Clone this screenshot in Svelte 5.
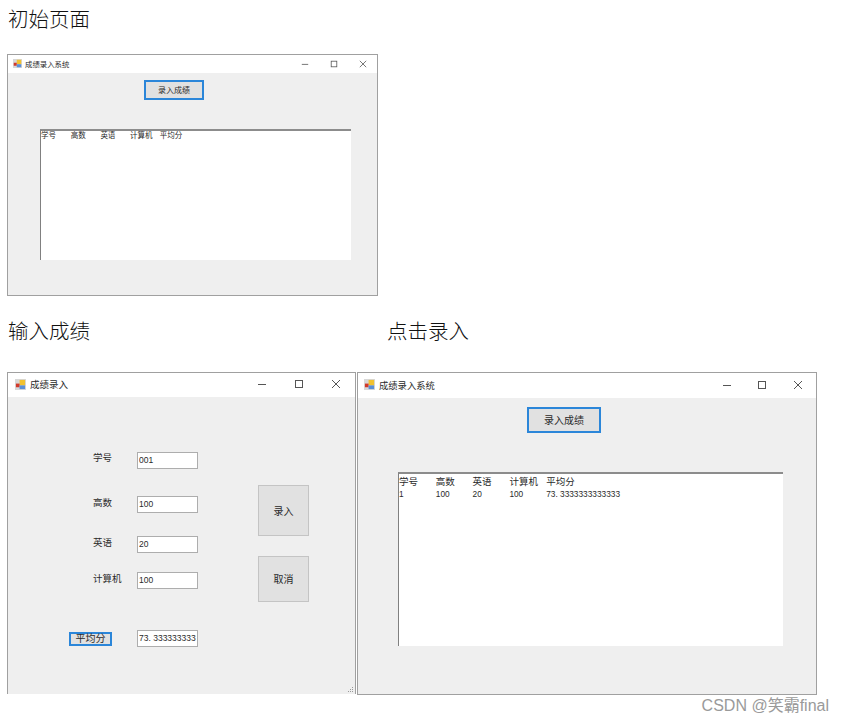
<script lang="ts">
  const columns = ['学号', '高数', '英语', '计算机', '平均分'];
  const result = ['1', '100', '20', '100', '73. 3333333333333'];
  const fields = [
    { label: '学号', value: '001' },
    { label: '高数', value: '100' },
    { label: '英语', value: '20' },
    { label: '计算机', value: '100' }
  ];
</script>

{#snippet titlebar(title: string)}
  <div class="titlebar">
    <svg class="app-icon" viewBox="0 0 12 12">
      <rect width="12" height="12" fill="#d8d8d8" />
      <rect x="5" y="1" width="6" height="6" fill="#f2c230" />
      <rect x="1" y="5" width="4" height="4" fill="#d23a2a" />
      <rect x="5" y="7" width="6" height="4" fill="#5a8fd8" />
    </svg>
    <span class="title">{title}</span>
    <div class="controls">
      <svg viewBox="0 0 10 10"><path d="M1 5.5h8" /></svg>
      <svg viewBox="0 0 10 10"><rect x="1.5" y="1.5" width="7" height="7" /></svg>
      <svg viewBox="0 0 10 10"><path d="M1 1l8 8M9 1l-8 8" /></svg>
    </div>
  </div>
{/snippet}

{#snippet listview(rows: string[][])}
  <div class="listview">
    <div class="list-row head">
      {#each columns as col}<span>{col}</span>{/each}
    </div>
    {#each rows as row}
      <div class="list-row">
        {#each row as cell}<span>{cell}</span>{/each}
      </div>
    {/each}
  </div>
{/snippet}

<main class="page">
  <h2 class="caption">初始页面</h2>
  <section class="window win-initial">
    {@render titlebar('成绩录入系统')}
    <div class="body">
      <button class="btn focused open-btn">录入成绩</button>
      {@render listview([])}
    </div>
  </section>

  <div class="captions">
    <h2 class="caption">输入成绩</h2>
    <h2 class="caption">点击录入</h2>
  </div>

  <div class="windows">
    <section class="window win-entry">
      {@render titlebar('成绩录入')}
      <div class="body">
        <div class="form">
          {#each fields as field}
            <div class="field">
              <span class="field-label">{field.label}</span>
              <input class="input" value={field.value} readonly />
            </div>
          {/each}
          <div class="field average">
            <button class="btn focused avg-btn">平均分</button>
            <input class="input" value="73. 3333333333333" readonly />
          </div>
        </div>
        <div class="actions">
          <button class="btn big submit">录入</button>
          <button class="btn big cancel">取消</button>
        </div>
        <svg class="grip" viewBox="0 0 8 8">
          <path d="M6 1h1v1H6zM4 3h1v1H4zM6 3h1v1H6zM2 5h1v1H2zM4 5h1v1H4zM6 5h1v1H6z" />
        </svg>
      </div>
    </section>

    <section class="window win-result">
      {@render titlebar('成绩录入系统')}
      <div class="body">
        <button class="btn focused open-btn">录入成绩</button>
        {@render listview([result])}
      </div>
    </section>
  </div>

  <div class="watermark">CSDN @笑霸final</div>
</main>

<style>
  :global(body) {
    background: #fff;
  }

  .page {
    position: relative;
    box-sizing: border-box;
    width: 843px;
    height: 724px;
    padding-left: 7px;
    overflow: hidden;
    font-family: "Liberation Sans", "Noto Sans CJK SC", sans-serif;
    color: #2a2a2a;
  }

  .caption {
    margin: 0;
    padding-left: 1px;
    height: 40px;
    line-height: 40px;
    font-family: "Liberation Serif", "Noto Sans CJK SC", serif;
    font-size: 20.5px;
    font-weight: 300;
    color: #111;
  }

  .captions {
    display: flex;
    gap: 296px;
    margin-top: 16px;
  }

  .window {
    box-sizing: border-box;
    display: flex;
    flex-direction: column;
    border: 1px solid #a0a0a0;
    background: #efefef;
  }

  .titlebar {
    box-sizing: border-box;
    display: flex;
    align-items: center;
    flex: none;
    background: #fff;
  }

  .app-icon {
    flex: none;
  }

  .controls {
    display: flex;
    margin-left: auto;
  }

  .controls svg {
    fill: none;
    stroke: #555;
    stroke-width: 1;
  }

  .body {
    position: relative;
    flex: 1;
    min-height: 0;
  }

  .btn {
    display: block;
    box-sizing: border-box;
    padding: 0 0 1px;
    border: 1px solid #c4c4c4;
    background: #e1e1e1;
    font-family: inherit;
    color: #2a2a2a;
  }

  .btn.focused {
    border: 2px solid #2b86d9;
  }

  .listview {
    box-sizing: border-box;
    background: #fff;
    border-top: 2px solid #8c8c8c;
    border-left: 1px solid #808080;
  }

  .list-row {
    display: flex;
  }

  /* first window: everything is drawn about 0.8x */
  .win-initial {
    width: 371px;
    height: 242px;
    margin-top: 14px;
  }

  .win-initial .titlebar {
    height: 18px;
    padding: 0 0 1px 5px;
    font-size: 7.4px;
  }

  .win-initial .app-icon {
    width: 9px;
    height: 9px;
    margin-right: 3px;
  }

  .win-initial .controls svg {
    width: 8px;
    height: 8px;
    margin-right: 21px;
  }

  .win-initial .controls svg:last-child {
    margin-right: 10px;
  }

  .win-initial .open-btn {
    width: 60px;
    height: 20px;
    margin: 7px 0 0 136px;
    font-size: 8px;
  }

  .win-initial .listview {
    width: 311px;
    height: 131px;
    margin: 29px 0 0 32px;
    font-size: 7.5px;
  }

  .win-initial .list-row span {
    width: 29.7px;
    line-height: 9px;
    flex: none;
  }

  .windows {
    display: flex;
    align-items: flex-start;
    margin-top: 20px;
  }

  /* entry window */
  .win-entry {
    width: 349px;
    height: 322px;
    border-bottom: none;
    flex: none;
  }

  .win-entry .titlebar {
    height: 24px;
    padding: 0 0 2px 7px;
    font-size: 9.5px;
  }

  .win-entry .app-icon,
  .win-result .app-icon {
    width: 11px;
    height: 11px;
    margin-right: 4px;
  }

  .win-entry .controls svg {
    width: 10px;
    height: 10px;
    margin-right: 27px;
  }

  .win-entry .controls svg:last-child {
    margin-right: 14px;
  }

  .win-entry .body {
    display: flex;
    font-size: 9.5px;
  }

  .form {
    box-sizing: border-box;
    width: 250px;
    padding-top: 55px;
  }

  .field {
    display: flex;
    align-items: flex-start;
    height: 17px;
    padding-left: 85px;
    margin-bottom: 27px;
  }

  .field:nth-child(2) {
    margin-bottom: 23px;
  }

  .field:nth-child(3) {
    margin-bottom: 19px;
  }

  .field:nth-child(4) {
    margin-bottom: 41px;
  }

  .field-label {
    width: 44px;
    flex: none;
    line-height: 12px;
  }

  .field:nth-child(n + 2) .field-label {
    margin-top: 1px;
  }

  .average {
    padding-left: 61px;
    align-items: center;
  }

  .avg-btn {
    width: 43px;
    height: 14px;
    margin-right: 25px;
    font-size: 10px;
    line-height: 10px;
  }

  .input {
    box-sizing: border-box;
    width: 61px;
    height: 17px;
    margin: 0;
    padding: 0 1px 1px;
    border: 1px solid #adadad;
    background: #fff;
    font-family: inherit;
    font-size: 8.5px;
    color: #2a2a2a;
    outline: none;
  }

  .actions {
    padding: 88px 0 0 0;
  }

  .btn.big {
    width: 51px;
    font-size: 10px;
  }

  .submit {
    height: 51px;
    margin-bottom: 20px;
  }

  .cancel {
    height: 46px;
  }

  .grip {
    position: absolute;
    right: 1px;
    bottom: 0;
    width: 8px;
    height: 8px;
    fill: #999;
  }

  /* result window */
  .win-result {
    width: 460px;
    height: 323px;
    margin-left: 1px;
    flex: none;
  }

  .win-result .titlebar {
    height: 25px;
    padding: 0 0 2px 6px;
    font-size: 9.3px;
  }

  .win-result .controls svg {
    width: 10px;
    height: 10px;
    margin-right: 25px;
  }

  .win-result .controls svg:nth-child(2) {
    margin-right: 26px;
  }

  .win-result .controls svg:last-child {
    margin-right: 13px;
  }

  .win-result .open-btn {
    width: 74px;
    height: 26px;
    margin: 9px 0 0 169px;
    font-size: 10px;
  }

  .win-result .listview {
    width: 385px;
    height: 174px;
    margin: 39px 0 0 40px;
    padding-top: 1px;
    font-size: 9.5px;
  }

  .win-result .list-row span {
    width: 36.8px;
    flex: none;
    line-height: 13px;
    white-space: nowrap;
  }

  .win-result .list-row:not(.head) {
    font-size: 8.3px;
  }

  .watermark {
    position: absolute;
    right: 14px;
    top: 696px;
    font-size: 16px;
    line-height: 20px;
    color: #9a9a9a;
  }
</style>
